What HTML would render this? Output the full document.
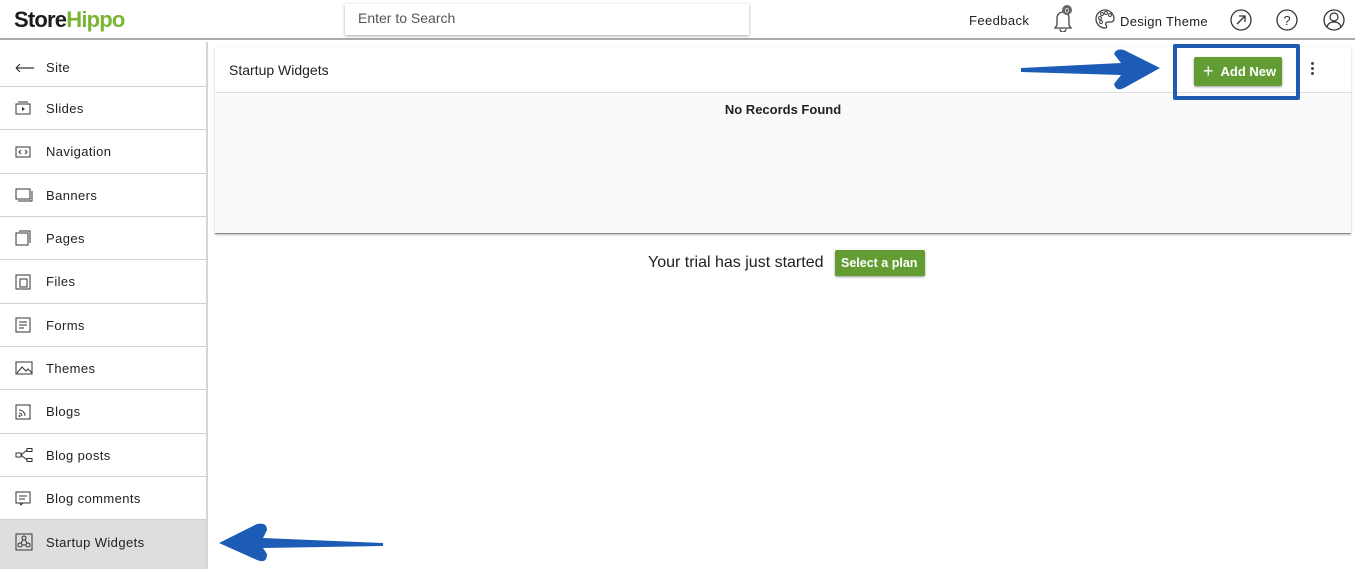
<!DOCTYPE html>
<html><head><meta charset="utf-8"><style>
*{box-sizing:border-box;margin:0;padding:0}
body{width:1355px;height:569px;overflow:hidden;background:#fff;font-family:"Liberation Sans",Arial,sans-serif;color:#222;position:relative}
.hdr{position:absolute;left:0;top:0;width:1355px;height:40px;border-bottom:2px solid #aaa;background:#fff}
.logo{position:absolute;left:14px;top:7px;font-weight:bold;font-size:22px;letter-spacing:-0.8px;font-family:"Liberation Sans",sans-serif}
.search{position:absolute;left:345px;top:4px;width:404px;height:31px;box-shadow:0 1px 3px rgba(0,0,0,.35);font-size:14px;color:#555;padding:6px 13px;background:#fff}
.sb{position:absolute;left:0;top:42px;width:208px;height:527px;border-right:2px solid #d6d6d6}
.row{position:absolute;left:0;width:206px;border-bottom:1px solid #d0d0d0;font-size:13px;letter-spacing:.4px;display:flex;align-items:center}
.row svg{position:absolute;left:15px}
.row span{position:absolute;left:46px}
.panel{position:absolute;left:215px;top:47px;width:1136px;height:187px;box-shadow:0 1px 2px rgba(0,0,0,.25);border-bottom:1px solid #888;background:#fafafa}
.ph{height:46px;background:#fff;border-bottom:1px solid #ddd;font-size:14px;padding:15px 14px}
.btn{background:#629c33;color:#fff;font-weight:bold;border-radius:2px;box-shadow:0 1px 2px rgba(0,0,0,.4);display:flex;align-items:center}
</style></head><body>
<div class="hdr">
<div class="logo"><span style="color:#1d1d1d">Store</span><span style="color:#7ab536">Hippo</span></div>
<div class="search">Enter to Search</div>
<div style="position:absolute;left:969px;top:13px;font-size:13px;letter-spacing:.4px">Feedback</div>
<svg style="position:absolute;left:1050px;top:4px" width="26" height="28" viewBox="0 0 26 28"><path d="M5 24h16l-2-3v-7a6 6 0 0 0-12 0v7z M10 25a3 3 0 0 0 6 0" fill="none" stroke="#444" stroke-width="1.3"/><circle cx="17" cy="6" r="5" fill="#666"/><text x="17" y="9" font-size="7" fill="#fff" text-anchor="middle" font-family="Liberation Sans">0</text></svg>
<svg style="position:absolute;left:1094px;top:8px" width="22" height="22" viewBox="0 0 22 22"><path d="M11 2a9 9 0 1 0 0 18c2 0 2-2 1-3s0-3 2-3h3a3 3 0 0 0 3-3c0-5-4-9-9-9z" fill="none" stroke="#444" stroke-width="1.3"/><circle cx="6" cy="10" r="1.5" fill="none" stroke="#444"/><circle cx="8" cy="6" r="1.5" fill="none" stroke="#444"/><circle cx="12" cy="5" r="1.5" fill="none" stroke="#444"/><circle cx="16" cy="7" r="1.5" fill="none" stroke="#444"/><circle cx="7" cy="14" r="1.5" fill="none" stroke="#444"/></svg>
<div style="position:absolute;left:1120px;top:14px;font-size:13px;letter-spacing:.3px">Design Theme</div>
<svg style="position:absolute;left:1230px;top:9px" width="22" height="22"><circle cx="11" cy="11" r="10" fill="none" stroke="#333" stroke-width="1.3"/><path d="M7 15l8-8M9 7h6v6" fill="none" stroke="#333" stroke-width="1.3"/></svg>
<svg style="position:absolute;left:1276px;top:9px" width="22" height="22"><circle cx="11" cy="11" r="10" fill="none" stroke="#333" stroke-width="1.3"/><text x="11" y="16" font-size="13" text-anchor="middle" fill="#333" font-family="Liberation Sans">?</text></svg>
<svg style="position:absolute;left:1323px;top:9px" width="22" height="22"><circle cx="11" cy="11" r="10" fill="none" stroke="#333" stroke-width="1.3"/><circle cx="11" cy="8" r="4" fill="none" stroke="#333" stroke-width="1.2"/><path d="M4 18c1-4 4-5 7-5s6 1 7 5" fill="none" stroke="#333" stroke-width="1.2"/></svg>
</div>
<div class="sb">
<div class="row" style="top:7px;height:38px"><svg width="20" height="10"><path d="M1 5h18M1 5l4-4M1 5l4 4" fill="none" stroke="#333" stroke-width="1.2"/></svg><span>Site</span></div>
<div class="row" style="top:45px;height:43px"><svg width="16" height="14"><rect x="1" y="3" width="14" height="10" fill="none" stroke="#333"/><path d="M3 1h10" stroke="#333"/><path d="M7 6l3 2-3 2z" fill="#333"/></svg><span>Slides</span></div>
<div class="row" style="top:88px;height:44px"><svg width="16" height="14"><rect x="1" y="2" width="14" height="10" fill="none" stroke="#333"/><path d="M6 5l-2 2 2 2M10 5l2 2-2 2" fill="none" stroke="#333"/></svg><span>Navigation</span></div>
<div class="row" style="top:132px;height:43px"><svg width="18" height="14"><rect x="1" y="1" width="14" height="10" fill="none" stroke="#333"/><path d="M3 13h14V3" fill="none" stroke="#333"/></svg><span>Banners</span></div>
<div class="row" style="top:175px;height:43px"><svg width="16" height="16"><rect x="1" y="3" width="12" height="12" fill="none" stroke="#333"/><path d="M4 1h11v12" fill="none" stroke="#333"/></svg><span>Pages</span></div>
<div class="row" style="top:218px;height:44px"><svg width="16" height="16"><rect x="1" y="1" width="14" height="14" fill="none" stroke="#333"/><rect x="5" y="5" width="7" height="8" fill="none" stroke="#333"/></svg><span>Files</span></div>
<div class="row" style="top:262px;height:43px"><svg width="16" height="16"><rect x="1" y="1" width="14" height="14" fill="none" stroke="#333"/><path d="M4 5h8M4 8h8M4 11h5" stroke="#333"/></svg><span>Forms</span></div>
<div class="row" style="top:305px;height:43px"><svg width="18" height="14"><rect x="1" y="1" width="16" height="12" fill="none" stroke="#333"/><path d="M2 12l5-6 4 4 2-2 4 4" fill="none" stroke="#333"/></svg><span>Themes</span></div>
<div class="row" style="top:348px;height:44px"><svg width="16" height="16"><rect x="1" y="1" width="14" height="14" fill="none" stroke="#333"/><path d="M4 6a6 6 0 0 1 6 6M4 9a3 3 0 0 1 3 3" fill="none" stroke="#333"/><circle cx="4.5" cy="12" r="1" fill="#333"/></svg><span>Blogs</span></div>
<div class="row" style="top:392px;height:43px"><svg width="20" height="14"><rect x="1" y="5" width="5" height="4" fill="none" stroke="#333"/><path d="M6 7l6-5M6 7l6 5" stroke="#333"/><rect x="12" y="0.5" width="5" height="3" fill="none" stroke="#333"/><rect x="12" y="10.5" width="5" height="3" fill="none" stroke="#333"/></svg><span>Blog posts</span></div>
<div class="row" style="top:435px;height:43px"><svg width="16" height="16"><rect x="1" y="2" width="14" height="11" fill="none" stroke="#333"/><path d="M4 6h8M4 9h6M5 13l1 2 2-2" fill="none" stroke="#333"/></svg><span>Blog comments</span></div>
<div class="row" style="top:478px;height:49px;background:#dedede;border-bottom:none;align-items:flex-start"><svg style="top:13px" width="18" height="18"><rect x="1" y="1" width="16" height="16" fill="none" stroke="#333"/><circle cx="9" cy="5" r="2" fill="none" stroke="#333"/><circle cx="5" cy="12" r="2" fill="none" stroke="#333"/><circle cx="13" cy="12" r="2" fill="none" stroke="#333"/><path d="M8 7l-2 3M10 7l2 3M7 12h4" stroke="#333"/></svg><span style="top:15px">Startup Widgets</span></div>
</div>
<div class="panel">
<div class="ph">Startup Widgets</div>
<div style="position:absolute;left:0;width:100%;top:55px;text-align:center;font-size:13px;font-weight:bold">No Records Found</div>
</div>
<div style="position:absolute;left:1173px;top:44px;width:127px;height:56px;border:4px solid #1f5bb0;border-radius:2px"></div>
<div class="btn" style="position:absolute;left:1194px;top:57px;width:88px;height:29px;font-size:13px;padding-left:9px"><span style="font-size:18px;font-weight:normal;margin-right:7px">+</span>Add New</div>
<div style="position:absolute;left:1311px;top:62px;width:4px">
<div style="width:3px;height:3px;background:#444;border-radius:50%;margin-bottom:2px"></div><div style="width:3px;height:3px;background:#444;border-radius:50%;margin-bottom:2px"></div><div style="width:3px;height:3px;background:#444;border-radius:50%"></div></div>
<svg style="position:absolute;left:1018px;top:46px" width="145" height="48"><path d="M3 22 L103 17 L96 8 Q98 2 106 4 L142 22 L106 42 Q98 46 96 38 L103 29 L3 26z" fill="#1d5cb6"/></svg>
<svg style="position:absolute;left:215px;top:518px" width="170" height="48"><path d="M168 25 L48 20 L52 12 Q52 4 42 6 L4 25 L42 42 Q52 46 52 36 L48 30 L168 28z" fill="#1d5cb6"/></svg>
<div style="position:absolute;left:648px;top:254px;font-size:16px">Your trial has just started</div>
<div class="btn" style="position:absolute;left:835px;top:250px;width:90px;height:26px;font-size:12.5px;padding-left:6px">Select a plan</div>
</body></html>
